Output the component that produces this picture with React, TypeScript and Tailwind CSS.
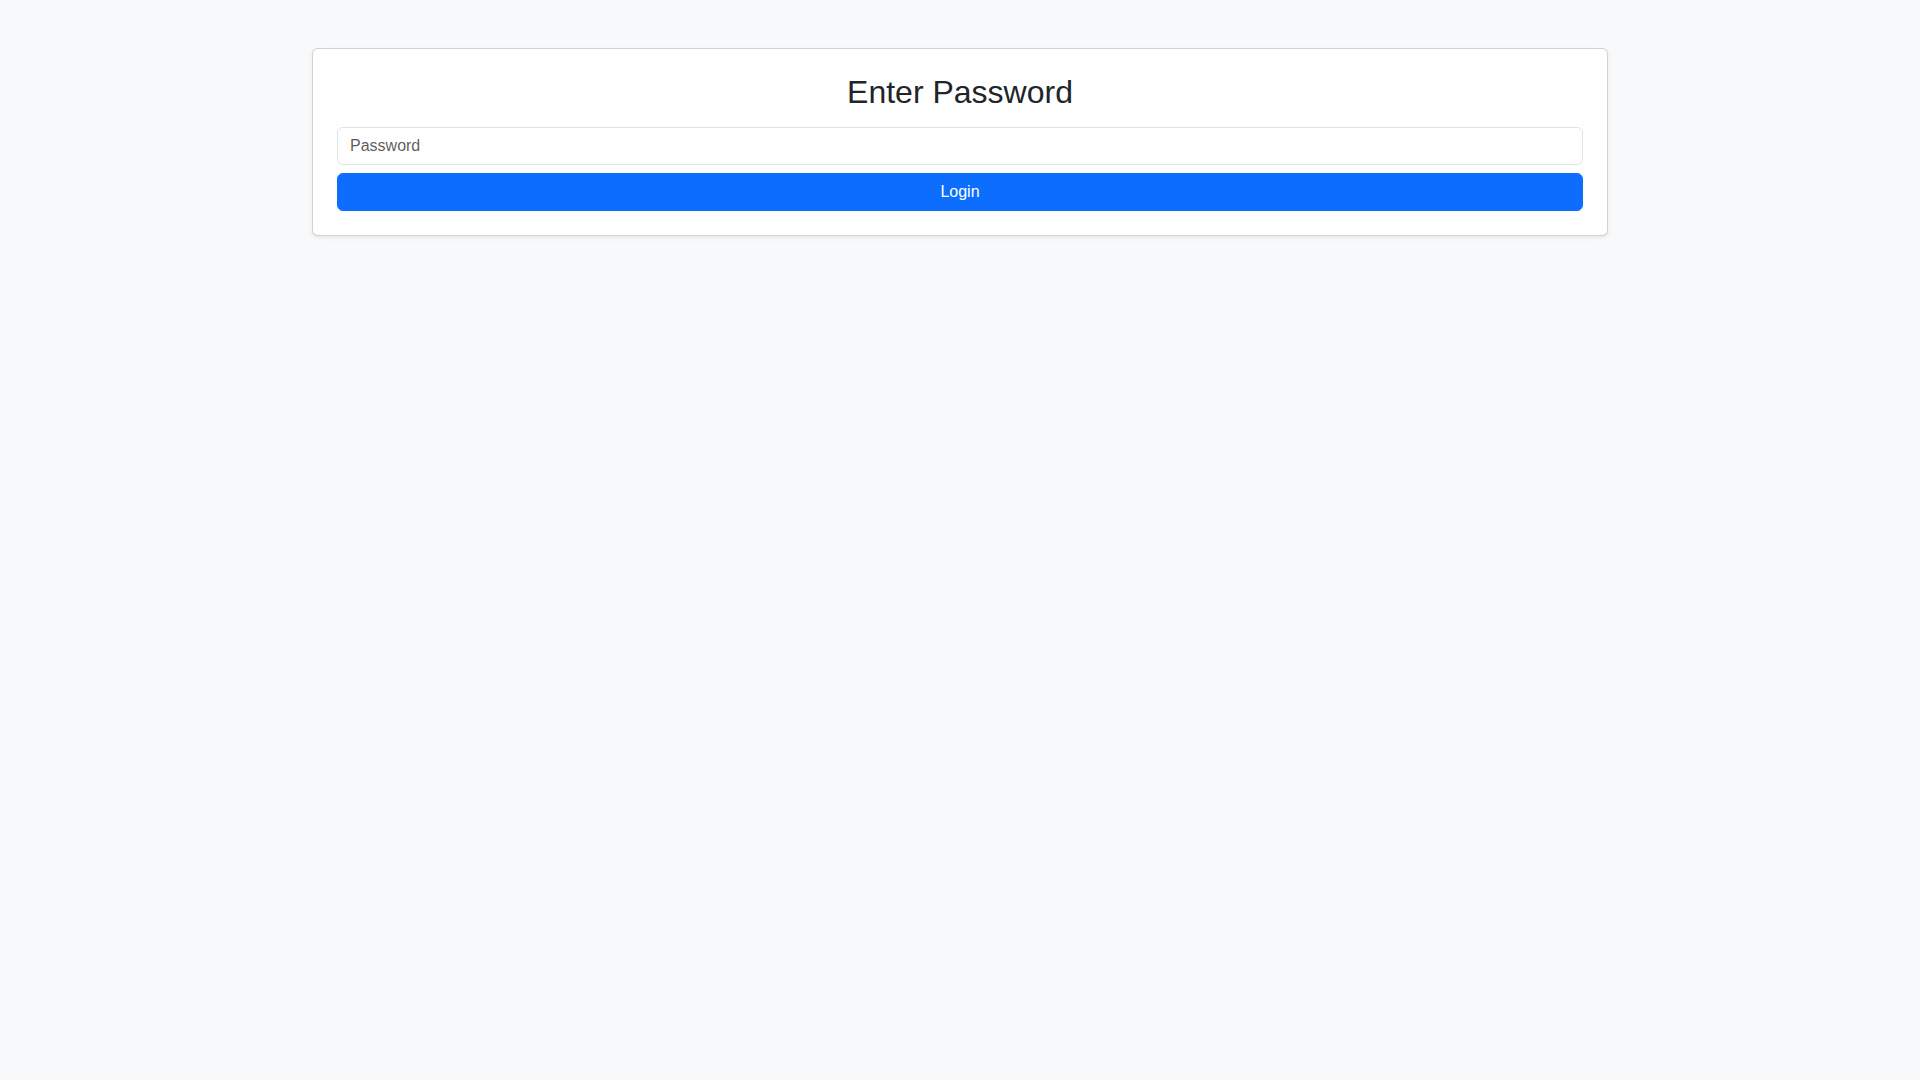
import React from "react";

export default function App() {
  return (
    <div
      className="min-h-screen w-full bg-[#f8f9fa] text-[#212529]"
      style={{ fontFamily: '"Liberation Sans", Arial, sans-serif' }}
    >
      <div className="mx-auto w-full max-w-[1320px] px-3 pt-12">
        <div className="rounded-md border border-[rgba(0,0,0,0.175)] bg-white p-6 shadow-[0_2px_4px_rgba(0,0,0,0.075)]">
          <h2 className="mb-4 text-center text-[32px] font-medium leading-[1.2] text-[#212529]">
            Enter Password
          </h2>
          <input
            type="password"
            placeholder="Password"
            className="mb-2 block h-[38px] w-full rounded-md border border-[#dee2e6] bg-white px-3 py-1.5 text-base leading-6 text-[#212529] outline-none placeholder:text-[rgba(33,37,41,0.75)]"
          />
          <button
            type="button"
            className="block h-[38px] w-full rounded-md border border-[#0d6efd] bg-[#0d6efd] px-3 py-1.5 text-base leading-6 text-white"
          >
            Login
          </button>
        </div>
      </div>
    </div>
  );
}
